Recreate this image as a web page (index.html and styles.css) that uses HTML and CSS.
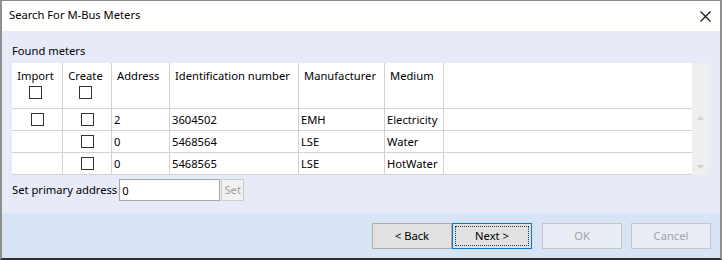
FILE: index.html
```html
<!DOCTYPE html>
<html>
<head>
<meta charset="utf-8">
<link rel="stylesheet" href="styles.css">
</head>
<body>
<div class="window">
  <div class="titlebar">
    <span class="title">Search For M-Bus Meters</span>
    <svg class="close" width="11" height="11" viewBox="0 0 11 11"><path d="M0.5 0.5 L10.5 10.5 M10.5 0.5 L0.5 10.5" stroke="#111" stroke-width="1.1" fill="none"/></svg>
  </div>
  <div class="content">
    <div class="label">Found meters</div>
    <div class="grid-wrap">
      <div class="grid">
        <div class="hd chk">Import<span class="cb"></span></div>
        <div class="hd chk">Create<span class="cb"></span></div>
        <div class="hd">Address</div>
        <div class="hd">Identification number</div>
        <div class="hd">Manufacturer</div>
        <div class="hd">Medium</div>
        <div class="hd last"></div>

        <div class="cell center"><span class="cb"></span></div>
        <div class="cell center"><span class="cb"></span></div>
        <div class="cell">2</div>
        <div class="cell">3604502</div>
        <div class="cell">EMH</div>
        <div class="cell">Electricity</div>
        <div class="cell last"></div>

        <div class="cell center"></div>
        <div class="cell center"><span class="cb"></span></div>
        <div class="cell">0</div>
        <div class="cell">5468564</div>
        <div class="cell">LSE</div>
        <div class="cell">Water</div>
        <div class="cell last"></div>

        <div class="cell center"></div>
        <div class="cell center"><span class="cb"></span></div>
        <div class="cell">0</div>
        <div class="cell">5468565</div>
        <div class="cell">LSE</div>
        <div class="cell">HotWater</div>
        <div class="cell last"></div>
      </div>
      <div class="scrollbar">
        <div class="sb-head"></div>
        <div class="sb-btn"><svg width="7" height="4" viewBox="0 0 7 4"><path d="M0 4 L3.5 0 L7 4 Z" fill="#d2d2d2"/></svg></div>
        <div class="sb-track"></div>
        <div class="sb-btn"><svg width="7" height="4" viewBox="0 0 7 4"><path d="M0 0 L3.5 4 L7 0 Z" fill="#d2d2d2"/></svg></div>
      </div>
    </div>
    <div class="addr-row">
      <span class="addr-label">Set primary address</span>
      <input class="addr-input" type="text" value="0">
      <button class="set-btn" disabled>Set</button>
    </div>
  </div>
  <div class="footer">
    <button class="btn">&lt; Back</button>
    <button class="btn focused"><span class="focus-ring">Next &gt;</span></button>
    <button class="btn disabled gap">OK</button>
    <button class="btn disabled gap2">Cancel</button>
  </div>
</div>
</body>
</html>
```

FILE: styles.css
```css
* { box-sizing: border-box; }
html, body { margin: 0; padding: 0; background: #ffffff; }
body {
  font-family: "Noto Sans", "Open Sans", sans-serif;
  font-size: 11.2px;
  line-height: 16px;
  color: #000;
}
.window {
  width: 722px;
  height: 260px;
  border-top: 1px solid #8a8a8a;
  border-left: 2px solid #8f8f8f;
  border-right: 2px solid #8f8f8f;
  border-bottom: 2px solid #2e2e2e;
  display: flex;
  flex-direction: column;
  background: #fff;
}
.titlebar {
  height: 30px;
  flex: none;
  background: #fff;
  display: flex;
  align-items: center;
  padding: 0 9px 2px 7px;
}
.title { flex: 1; }
.close { margin-right: 0; margin-top: 2px; }
.content {
  flex: none;
  height: 182px;
  background: #e7ebf8;
  padding: 12px 11px 0 10px;
}
.label { height: 16px; margin-bottom: 4px; }
.grid-wrap {
  display: flex;
  width: 697px;
}
.grid {
  display: grid;
  grid-template-columns: 51px 49px 58px 129px 86px 59px 248px;
  grid-template-rows: 46px 22px 22px 22px;
  background: #fff;
  width: 680px;
}
.hd, .cell {
  border-right: 1px solid #d2d2d2;
  border-bottom: 1px solid #d2d2d2;
  white-space: nowrap;
  overflow: hidden;
}
.last { border-right: none; }
.hd { padding: 5px 0 0 5px; }
.hd.chk {
  padding: 5px 3px 0 0;
  display: flex;
  flex-direction: column;
  align-items: center;
}
.hd.chk .cb { margin-top: 2px; }
.cell {
  padding: 0 0 0 2px;
  display: flex;
  align-items: center;
}
.cell.center { justify-content: center; padding: 0; }
.cb {
  display: block;
  width: 13px;
  height: 13px;
  border: 1px solid #333;
  background: #fff;
}
.scrollbar {
  width: 17px;
  height: 112px;
  background: #efefef;
  display: flex;
  flex-direction: column;
}
.sb-head { height: 46px; }
.sb-btn {
  height: 17px;
  display: flex;
  align-items: center;
  justify-content: center;
}
.sb-track { flex: 1; }
.addr-row {
  display: flex;
  align-items: center;
  margin-top: 4px;
  height: 22px;
}
.addr-label { margin-right: 2px; }
.addr-input {
  width: 101px;
  height: 22px;
  border: 1px solid #a5a5a5;
  background: #fff;
  font: inherit;
  padding: 0 2px;
  margin: 0;
  color: #000;
}
.set-btn {
  margin-left: 1px;
  width: 23px;
  height: 22px;
  border: 1px solid #cccccc;
  background: #f2f2f2;
  color: #a0a0a0;
  font: inherit;
  padding: 0;
}
.footer {
  flex: 1;
  background: #d9e3f6;
  display: flex;
  padding: 10px 9px 0 0;
  justify-content: flex-end;
}
.btn {
  width: 80px;
  height: 26px;
  font: inherit;
  color: #000;
  background: #e1e1e1;
  border: 1px solid #adadad;
  padding: 0;
  margin: 0;
}
.btn.focused {
  border-color: #0078d7;
  padding: 2px;
  display: flex;
}
.focus-ring {
  flex: 1;
  border: 1px dotted #333;
  display: flex;
  align-items: center;
  justify-content: center;
}
.btn.disabled {
  background: #e9edf6;
  border-color: #c4c4c4;
  color: #a2a2a2;
}
.btn.gap { margin-left: 10px; }
.btn.gap2 { margin-left: 9px; }
```
